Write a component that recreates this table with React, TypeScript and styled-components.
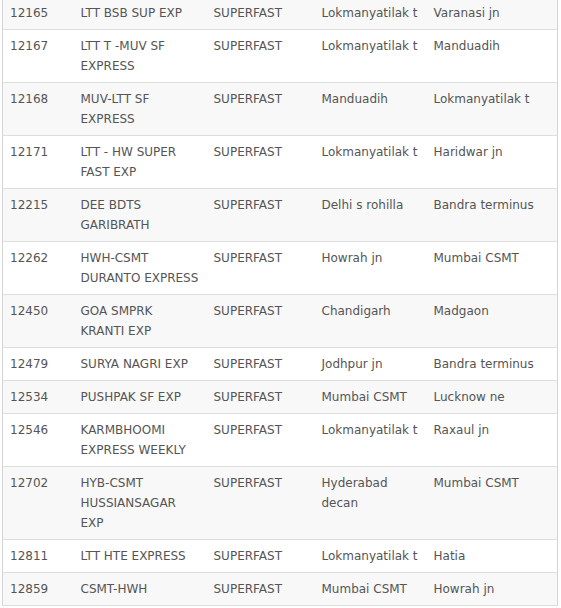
import React from "react";
import styled, { createGlobalStyle } from "styled-components";

const Global = createGlobalStyle`
  html, body { margin: 0; padding: 0; background: #fff; }
  body { font-family: "DejaVu Sans", Verdana, sans-serif; }
`;

const Wrap = styled.div`
  margin: -4px 0 0 2px;
  width: 555px;
`;

const Table = styled.table`
  width: 555px;
  border-collapse: collapse;
  table-layout: fixed;
  border-left: 1px solid #d4d4d4;
  border-right: 1px solid #d4d4d4;
  border-bottom: 1px solid #dddddd;
  font-size: 12px;
  line-height: 20px;
  color: #555;
`;

const Row = styled.tr<{ $shade: boolean }>`
  background: ${(p) => (p.$shade ? "#f8f8f8" : "#ffffff")};
  border-top: 1px solid #dddddd;
`;

const Cell = styled.td`
  padding: 6px 7px 6px 7px;
  vertical-align: top;
  text-align: left;
  word-wrap: break-word;
`;

type Train = [string, string, string, string, string];

const trains: Train[] = [
  ["12165", "LTT BSB SUP EXP", "SUPERFAST", "Lokmanyatilak t", "Varanasi jn"],
  ["12167", "LTT T -MUV SF EXPRESS", "SUPERFAST", "Lokmanyatilak t", "Manduadih"],
  ["12168", "MUV-LTT SF EXPRESS", "SUPERFAST", "Manduadih", "Lokmanyatilak t"],
  ["12171", "LTT - HW SUPER FAST EXP", "SUPERFAST", "Lokmanyatilak t", "Haridwar jn"],
  ["12215", "DEE BDTS GARIBRATH", "SUPERFAST", "Delhi s rohilla", "Bandra terminus"],
  ["12262", "HWH-CSMT DURANTO EXPRESS", "SUPERFAST", "Howrah jn", "Mumbai CSMT"],
  ["12450", "GOA SMPRK KRANTI EXP", "SUPERFAST", "Chandigarh", "Madgaon"],
  ["12479", "SURYA NAGRI EXP", "SUPERFAST", "Jodhpur jn", "Bandra terminus"],
  ["12534", "PUSHPAK SF EXP", "SUPERFAST", "Mumbai CSMT", "Lucknow ne"],
  ["12546", "KARMBHOOMI EXPRESS WEEKLY", "SUPERFAST", "Lokmanyatilak t", "Raxaul jn"],
  ["12702", "HYB-CSMT HUSSIANSAGAR EXP", "SUPERFAST", "Hyderabad decan", "Mumbai CSMT"],
  ["12811", "LTT HTE EXPRESS", "SUPERFAST", "Lokmanyatilak t", "Hatia"],
  ["12859", "CSMT-HWH", "SUPERFAST", "Mumbai CSMT", "Howrah jn"],
];

const widths = [71, 133, 108, 112, 131];

export default function App() {
  return (
    <>
      <Global />
      <Wrap>
        <Table>
          <colgroup>
            {widths.map((w, i) => (
              <col key={i} style={{ width: w }} />
            ))}
          </colgroup>
          <tbody>
            {trains.map((t, i) => (
              <Row key={t[0]} $shade={i % 2 === 0}>
                {t.map((c, j) => (
                  <Cell key={j}>{c}</Cell>
                ))}
              </Row>
            ))}
          </tbody>
        </Table>
      </Wrap>
    </>
  );
}
